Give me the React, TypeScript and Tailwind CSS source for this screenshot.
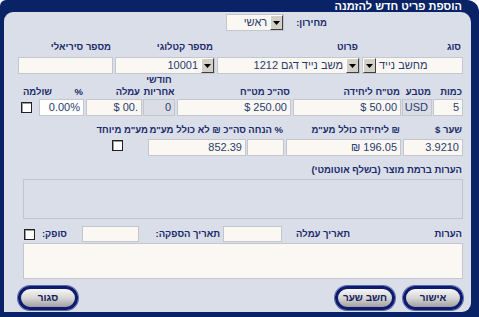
import React from "react";

const Arrow = () => (
  <div className="w-[13px] h-[15px] shrink-0 bg-[#d4d0c8] border border-t-[#ffffff] border-l-[#ffffff] border-r-[#404040] border-b-[#404040] flex items-center justify-center">
    <svg width="7" height="4" viewBox="0 0 7 4">
      <path d="M0 0h7L3.5 4z" fill="#000" />
    </svg>
  </div>
);

const Check = ({ className = "" }: { className?: string }) => (
  <div className={`w-[11px] h-[11px] shrink-0 bg-white border border-[#222] shadow-[inset_1px_1px_0_#9a9a9a] ${className}`} />
);

const Field = ({
  className,
  children,
}: {
  className: string;
  children?: React.ReactNode;
}) => (
  <div
    className={`h-[17px] shrink-0 border border-[#c3c6cc] text-[11px] leading-[15px] text-[#2a3b6e] text-right px-[3px] whitespace-nowrap overflow-hidden ${className}`}
  >
    <span dir="ltr">{children}</span>
  </div>
);

const Label = ({
  className,
  children,
}: {
  className: string;
  children?: React.ReactNode;
}) => (
  <div className={`shrink-0 text-[9.5px] font-bold text-[#1b2a6b] whitespace-nowrap leading-[12px] ${className}`}>
    {children}
  </div>
);

const Btn = ({ className, children }: { className: string; children: React.ReactNode }) => (
  <div
    className={`h-[24px] shrink-0 rounded-full border-[3px] border-[#0c1a70] bg-gradient-to-b from-[#f6f6f6] via-[#d6d6d6] to-[#a0a0a0] flex items-center justify-center text-[10px] font-bold text-[#14205a] shadow-[0_0_0_1px_#5a6aa8] ${className}`}
  >
    {children}
  </div>
);

export default function App() {
  return (
    <div className="w-[479px] h-[317px] bg-white font-['Liberation_Sans','DejaVu_Sans',sans-serif]">
      <div className="w-full h-full bg-[#0a2367] rounded-tl-[6px] rounded-tr-[12px] flex flex-col" dir="rtl">
        <div className="h-[12px] shrink-0 flex pr-[17px] text-white font-bold text-[11px] leading-[12px]">
          הוספת פריט חדש להזמנה
        </div>
        <div className="flex-1 ml-[4px] mr-[8px] mb-[5px] bg-[#d9dee9] rounded-tl-[9px] rounded-tr-[10px] rounded-br-[9px] pr-[8px] pl-[14px] flex flex-col">
          {/* price list */}
          <div className="mt-[2px] h-[17px] flex items-center">
            <div className="w-[136px] shrink-0" />
            <Label className="">מחירון:</Label>
            <div className="w-[12px] shrink-0" />
            <div className="w-[58px] h-[17px] bg-[#fbf8f3] border border-[#c3c6cc] flex items-center text-[11px] text-[#2a3b6e]">
              <Arrow />
              <span className="pr-[3px]">ראשי</span>
            </div>
          </div>

          {/* labels row 1 */}
          <div className="mt-[9px] h-[14px] flex items-center gap-[2px]">
            <Label className="w-[101px] pr-[2px]">סוג</Label>
            <Label className="w-[143px] pr-[2px]">פרוט</Label>
            <Label className="w-[100px] pr-[2px]">מספר קטלוגי</Label>
            <Label className="w-[95px] pr-[2px]">מספר סיריאלי</Label>
          </div>
          {/* fields row 1 */}
          <div className="mt-[3px] h-[17px] flex gap-[2px]">
            <div dir="ltr" className="w-[101px] h-[17px] bg-[#fbf8f3] border border-[#c3c6cc] flex items-center text-[11px] text-[#2a3b6e]">
              <Arrow />
              <span className="pl-[3px]" dir="rtl">מחשב נייד</span>
            </div>
            <div className="w-[143px] h-[17px] bg-[#fbf8f3] border border-[#c3c6cc] flex items-center text-[11px] text-[#2a3b6e]">
              <Arrow />
              <span className="pr-[3px] whitespace-nowrap">משב נייד דגם 1212</span>
            </div>
            <div className="w-[100px] h-[17px] bg-[#fbf8f3] border border-[#c3c6cc] flex items-center text-[11px] text-[#2a3b6e]">
              <Arrow />
              <span className="pr-[3px]">10001</span>
            </div>
            <Field className="w-[95px] bg-[#fbf8f3]" />
          </div>

          {/* labels row 2 */}
          <div className="mt-[3px] h-[21px] flex items-end">
            <Label className="w-[30px] pr-[1px]">כמות</Label>
            <Label className="w-[30px] mr-[1px] pr-[1px]">מטבע</Label>
            <Label className="w-[108px] mr-[1px] pr-[1px]">מט"ח ליחידה</Label>
            <Label className="w-[114px] mr-[2px] pr-[1px]">סה"כ מט"ח</Label>
            <Label className="w-[32px] mr-[2px] text-center leading-[11px]">
              חודשי
              <br />
              אחריות
            </Label>
            <Label className="w-[56px] mr-[1px] pr-[2px]">עמלה</Label>
            <Label className="w-[31px] mr-[2px] pr-[1px]">%</Label>
            <Label className="w-[35px] pr-[1px]">שולמה</Label>
          </div>
          {/* fields row 2 */}
          <div className="mt-[1px] h-[17px] flex items-center">
            <Field className="w-[30px] bg-[#fbf8f3]">5</Field>
            <Field className="w-[30px] mr-[1px] bg-[#dadde5] text-center">USD</Field>
            <Field className="w-[108px] mr-[1px] bg-[#fbf8f3]">$ 50.00</Field>
            <Field className="w-[114px] mr-[2px] bg-[#fbf8f3]">$ 250.00</Field>
            <Field className="w-[32px] mr-[2px] bg-[#dadde5]">0</Field>
            <Field className="w-[56px] mr-[1px] bg-[#fbf8f3]">$ 00.</Field>
            <Field className="w-[45px] mr-[2px] bg-white">0.00%</Field>
            <Check className="mr-[7px]" />
          </div>

          {/* labels row 3 */}
          <div className="mt-[8px] h-[12px] flex items-center">
            <Label className="w-[60px] pr-[1px]">שער $</Label>
            <Label className="w-[115px] mr-[2px] pr-[1px]">₪ ליחידה כולל מע"מ</Label>
            <Label className="w-[37px] mr-[2px] pr-[1px]">% הנחה</Label>
            <Label className="w-[98px] mr-[1px]">סה"כ ₪ לא כולל מע"מ</Label>
            <Label className="w-[54px]">מע"מ מיוחד</Label>
          </div>
          {/* fields row 3 */}
          <div className="mt-[3px] h-[17px] flex items-start">
            <Field className="w-[60px] bg-[#fbf8f3]">3.9210</Field>
            <Field className="w-[115px] mr-[2px] bg-[#fbf8f3]">₪ 196.05</Field>
            <Field className="w-[37px] mr-[2px] bg-[#fbf8f3]" />
            <Field className="w-[98px] mr-[1px] bg-[#fbf8f3]">852.39</Field>
            <Check className="mr-[25px] mt-[1px]" />
          </div>

          {/* product notes */}
          <div className="mt-[8px] h-[12px] flex items-center">
            <Label className="pr-[1px]">הערות ברמת מוצר (בשלף אוטומטי)</Label>
          </div>
          <div className="mt-[3px] h-[40px] ml-[5px] border border-[#bfc4cd] bg-[#d9dee9]" />

          {/* notes / dates */}
          <div className="mt-[7px] h-[16px] flex items-center">
            <Label className="w-[112px] pr-[1px]">הערות</Label>
            <Label className="w-[69px] pr-[1px]">תאריך עמלה</Label>
            <div className="w-[59px] h-[16px] shrink-0 bg-[#fbf8f3] border border-[#c3c6cc]" />
            <Label className="w-[84px] pr-[3px]">תאריך הספקה:</Label>
            <div className="w-[57px] h-[16px] shrink-0 bg-[#fbf8f3] border border-[#c3c6cc]" />
            <Label className="w-[44px] pr-[15px]">סופק:</Label>
            <Check className="mr-[3px]" />
          </div>
          <div className="mt-[1px] h-[36px] ml-[5px] border border-[#c3c6cc] bg-[#fbf8f3]" />

          {/* buttons */}
          <div className="mt-[6px] h-[25px] flex items-center">
            <Btn className="w-[60px]">אישור</Btn>
            <Btn className="w-[60px] mr-[8px]">חשב שער</Btn>
            <Btn className="w-[60px] mr-auto">סגור</Btn>
          </div>
        </div>
      </div>
    </div>
  );
}
